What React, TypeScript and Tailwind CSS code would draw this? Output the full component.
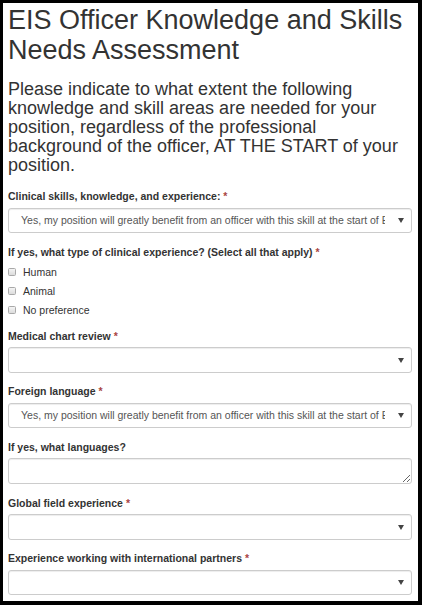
import React from "react";

const ANSWER =
  "Yes, my position will greatly benefit from an officer with this skill at the start of EIS";

function Label({ text, required }: { text: string; required?: boolean }) {
  return (
    <label className="mb-[3.75px] block text-[10.5px] font-bold leading-[15px] text-[#333]">
      {text}
      {required && <span className="text-[#a94442]"> *</span>}
    </label>
  );
}

function FakeSelect({ value }: { value?: string }) {
  return (
    <div className="flex h-[25.5px] items-center rounded-[3px] border border-[#ccc] bg-white shadow-[inset_0_1px_1px_rgba(0,0,0,0.075)]">
      <div className="flex-1 overflow-hidden whitespace-nowrap pl-[12px] text-[10.5px] text-[#555]">
        {value}
      </div>
      <div className="flex w-[26px] shrink-0 items-center justify-center pl-[6px]">
        <svg width="6" height="5" viewBox="0 0 6 5">
          <path d="M0 0 H6 L3 5 Z" fill="#444" />
        </svg>
      </div>
    </div>
  );
}

function Check({ text }: { text: string }) {
  return (
    <div className="flex h-[15px] items-center gap-[7px] text-[10.5px] leading-[15px] text-[#333]">
      <span className="h-[8px] w-[8px] rounded-[1.5px] border border-[#a9a9a9] bg-gradient-to-b from-[#f4f4f4] to-[#dcdcdc]" />
      {text}
    </div>
  );
}

export default function App() {
  return (
    <div className="h-[605px] w-[422px] bg-black pb-[4px] pl-[3px] pr-[4px] pt-[3px] font-['Liberation_Sans',Arial,sans-serif]">
      <div className="h-full overflow-hidden bg-white pl-[5px] pr-[6px]">

        {/* Header */}

        <h1 className="pt-[2px] text-[27px] leading-[30px] text-[#333]">
          EIS Officer Knowledge and Skills Needs Assessment
        </h1>

        <h3 className="mt-[15px] text-[18px] leading-[19px] text-[#333]">
          Please indicate to what extent the following knowledge and skill areas are needed for your
          position, regardless of the professional background of the officer, AT THE START of your
          position.
        </h3>

        <div className="mt-[14px]">

          <div className="mb-[11.25px]">
            <Label text="Clinical skills, knowledge, and experience:" required />
            <FakeSelect value={ANSWER} />
          </div>

          <div className="mb-[11px]">
            <Label text="If yes, what type of clinical experience? (Select all that apply)" required />
            <div className="mt-[5px] flex flex-col gap-[4px]">
              <Check text="Human" />
              <Check text="Animal" />
              <Check text="No preference" />
            </div>
          </div>

          <div className="mb-[11.25px]">
            <Label text="Medical chart review" required />
            <FakeSelect />
          </div>

          <div className="mb-[11.25px]">
            <Label text="Foreign language" required />
            <FakeSelect value={ANSWER} />
          </div>

          <div className="mb-[11.25px]">
            <Label text="If yes, what languages?" />
            <textarea
              rows={1}
              readOnly
              className="block h-[26px] w-full resize-y rounded-[3px] border border-[#ccc] bg-white px-[9px] py-[4px] text-[10.5px] text-[#555] shadow-[inset_0_1px_1px_rgba(0,0,0,0.075)] outline-none"
            />
          </div>

          <div className="mb-[11.25px]">
            <Label text="Global field experience" required />
            <FakeSelect />
          </div>

          <div className="mb-[11.25px]">
            <Label text="Experience working with international partners" required />
            <FakeSelect />
          </div>

        </div>
      </div>
    </div>
  );
}
